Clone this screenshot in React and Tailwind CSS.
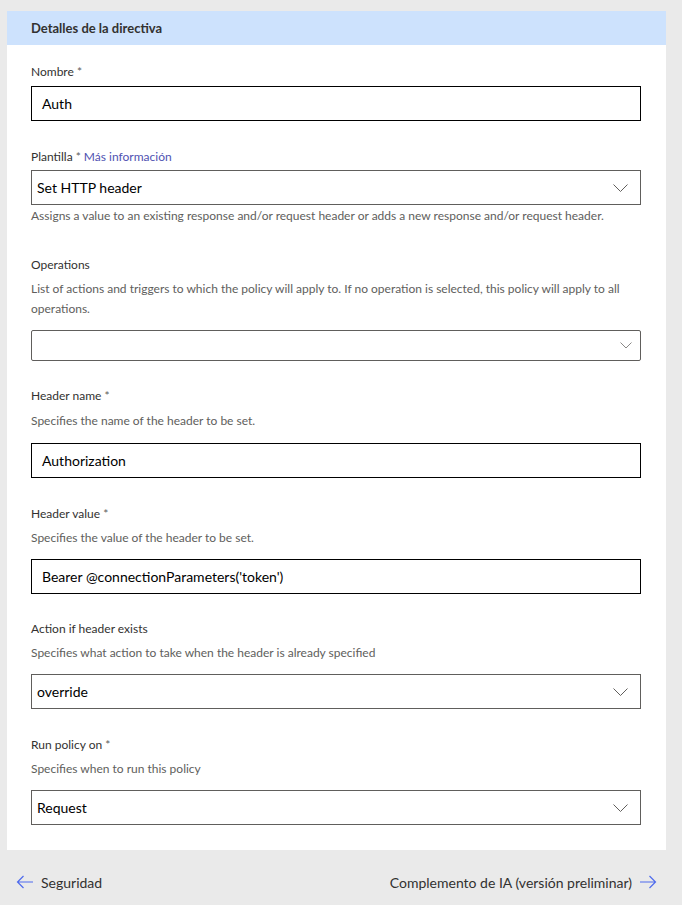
import React from 'react';

const font = { fontFamily: 'Lato, "Open Sans", sans-serif' };

const Chevron = ({ small }) =>
  small ? (
    <svg width="12" height="7" viewBox="0 0 12 7" fill="none" className="shrink-0">
      <path d="M0.5 0.5l5.5 5.5 5.5-5.5" stroke="#8a8886" strokeWidth="1" />
    </svg>
  ) : (
    <svg width="15" height="8" viewBox="0 0 15 8" fill="none" className="shrink-0">
      <path d="M0.5 0.5l7 7 7-7" stroke="#605e5c" strokeWidth="1" />
    </svg>
  );

const Label = ({ children, required }) => (
  <div className="text-[12px] leading-5 text-[#323130]">
    {children}
    {required && <span className="text-[#605e5c]"> *</span>}
  </div>
);

const Desc = ({ children }) => (
  <div className="text-[12px] leading-5 text-[#605e5c]">{children}</div>
);

const TextBox = ({ value }) => (
  <div className="h-[35px] border border-black flex items-center px-[10px] text-[14px] text-black">
    {value}
  </div>
);

const Select = ({ value }) => (
  <div className="h-[35px] border border-[#605e5c] flex items-center justify-between pl-[5px] pr-[12px] text-[14px] text-black">
    <span>{value}</span>
    <Chevron />
  </div>
);

const Arrow = ({ dir }) => (
  <svg width="18" height="14" viewBox="0 0 18 14" fill="none">
    {dir === 'left' ? (
      <path d="M17 7H1.5M7.5 1L1.5 7l6 6" stroke="#4f6bed" strokeWidth="1.2" />
    ) : (
      <path d="M1 7h15.5M10.5 1l6 6-6 6" stroke="#4f6bed" strokeWidth="1.2" />
    )}
  </svg>
);

export default function App() {
  return (
    <div className="h-[905px] overflow-hidden bg-[#eaeaea] pt-[11px]" style={font}>
      <div className="ml-[7px] w-[659px] bg-white">
        <div className="h-[34px] bg-[#cde2fd] flex items-center px-6 pt-[2px] text-[13px] font-bold text-[#323130]">
          Detalles de la directiva
        </div>

        <div className="pl-6 pr-[25px] pt-[17px] pb-[25px]">
          <Label required>Nombre</Label>
          <div className="mt-1">
            <TextBox value="Auth" />
          </div>

          <div className="mt-[26px] text-[12px] leading-5 text-[#323130]">
            Plantilla <span className="text-[#605e5c]">*</span>{' '}
            <span className="text-[#4f52b2]">Más información</span>
          </div>
          <div className="mt-[3px]">
            <Select value="Set HTTP header" />
          </div>
          <div className="mt-px">
            <Desc>
              Assigns a value to an existing response and/or request header or adds a new response and/or request header.
            </Desc>
          </div>

          <div className="mt-[29px]">
            <Label>Operations</Label>
          </div>
          <div className="mt-1">
            <Desc>
              List of actions and triggers to which the policy will apply to. If no operation is selected, this policy will apply to all operations.
            </Desc>
          </div>
          <div className="mt-[11px] h-[31px] rounded-[2px] border border-[#605e5c] flex items-center justify-end pr-[8px]">
            <Chevron small />
          </div>

          <div className="mt-[25px]">
            <Label required>Header name</Label>
          </div>
          <div className="mt-[5px]">
            <Desc>Specifies the name of the header to be set.</Desc>
          </div>
          <div className="mt-3">
            <TextBox value="Authorization" />
          </div>

          <div className="mt-[26px]">
            <Label required>Header value</Label>
          </div>
          <div className="mt-1">
            <Desc>Specifies the value of the header to be set.</Desc>
          </div>
          <div className="mt-[11px]">
            <TextBox value="Bearer @connectionParameters('token')" />
          </div>

          <div className="mt-[25px]">
            <Label>Action if header exists</Label>
          </div>
          <div className="mt-1">
            <Desc>Specifies what action to take when the header is already specified</Desc>
          </div>
          <div className="mt-[11px]">
            <Select value="override" />
          </div>

          <div className="mt-[26px]">
            <Label required>Run policy on</Label>
          </div>
          <div className="mt-1">
            <Desc>Specifies when to run this policy</Desc>
          </div>
          <div className="mt-[11px]">
            <Select value="Request" />
          </div>
        </div>
      </div>

      <div className="flex items-center justify-between h-[64px] pl-4 pr-[25px] text-[14px] text-[#323130]">
        <div className="flex items-center gap-[7px]">
          <Arrow dir="left" />
          <span>Seguridad</span>
        </div>
        <div className="flex items-center gap-[7px]">
          <span>Complemento de IA (versión preliminar)</span>
          <Arrow dir="right" />
        </div>
      </div>
    </div>
  );
}
